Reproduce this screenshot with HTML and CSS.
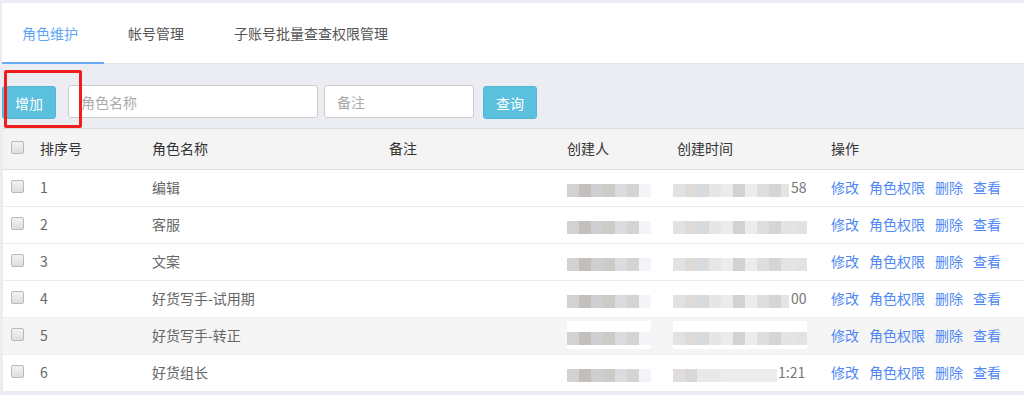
FILE: index.html
```html
<!DOCTYPE html>
<html lang="zh-CN">
<head>
    <meta charset="UTF-8">
    <title>角色维护</title>
    <link rel="stylesheet" href="styles.css">
</head>
<body>

    <div class="tabs">
        <a class="tab active">角色维护</a>
        <a class="tab">帐号管理</a>
        <a class="tab">子账号批量查查权限管理</a>
    </div>

    <div class="toolbar">
        <button class="btn btn-add">增加</button>
        <input type="text" class="field field-name" placeholder="角色名称">
        <input type="text" class="field field-note" placeholder="备注">
        <button class="btn btn-search">查询</button>
        <!-- annotation box around the add button -->
        <div class="mark"></div>
    </div>

    <table class="grid">
        <colgroup>
            <col class="c-check">
            <col class="c-no">
            <col class="c-name">
            <col class="c-note">
            <col class="c-user">
            <col class="c-time">
            <col class="c-ops">
        </colgroup>
        <thead>
            <tr>
                <th><span class="check"></span></th>
                <th>排序号</th>
                <th>角色名称</th>
                <th>备注</th>
                <th>创建人</th>
                <th>创建时间</th>
                <th>操作</th>
            </tr>
        </thead>
        <tbody>
            <tr>
                <td><span class="check"></span></td>
                <td>1</td>
                <td>编辑</td>
                <td></td>
                <td><span class="blur blur-user"></span></td>
                <td><span class="blur blur-time"></span><span class="tail">58</span></td>
                <td class="ops"><a>修改</a><a>角色权限</a><a>删除</a><a>查看</a></td>
            </tr>
            <tr>
                <td><span class="check"></span></td>
                <td>2</td>
                <td>客服</td>
                <td></td>
                <td><span class="blur blur-user"></span></td>
                <td><span class="blur blur-full"></span></td>
                <td class="ops"><a>修改</a><a>角色权限</a><a>删除</a><a>查看</a></td>
            </tr>
            <tr>
                <td><span class="check"></span></td>
                <td>3</td>
                <td>文案</td>
                <td></td>
                <td><span class="blur blur-user"></span></td>
                <td><span class="blur blur-full"></span></td>
                <td class="ops"><a>修改</a><a>角色权限</a><a>删除</a><a>查看</a></td>
            </tr>
            <tr>
                <td><span class="check"></span></td>
                <td>4</td>
                <td>好货写手-试用期</td>
                <td></td>
                <td><span class="blur blur-user"></span></td>
                <td><span class="blur blur-time"></span><span class="tail">00</span></td>
                <td class="ops"><a>修改</a><a>角色权限</a><a>删除</a><a>查看</a></td>
            </tr>
            <tr class="hover">
                <td><span class="check"></span></td>
                <td>5</td>
                <td>好货写手-转正</td>
                <td></td>
                <td><span class="blur blur-user"></span></td>
                <td><span class="blur blur-full"></span></td>
                <td class="ops"><a>修改</a><a>角色权限</a><a>删除</a><a>查看</a></td>
            </tr>
            <tr>
                <td><span class="check"></span></td>
                <td>6</td>
                <td>好货组长</td>
                <td></td>
                <td><span class="blur blur-user"></span></td>
                <td><span class="blur blur-short"></span><span class="tail">1:21</span></td>
                <td class="ops"><a>修改</a><a>角色权限</a><a>删除</a><a>查看</a></td>
            </tr>
        </tbody>
    </table>

</body>
</html>
```

FILE: styles.css
```css
body {
    margin: 0;
    padding: 3px 0 3px 2px;
    background-color: #ebedf2;
    font-family: "Noto Sans CJK SC", "Liberation Sans", sans-serif;
    font-size: 14px;
    color: #666;
}

/* tabs */
.tabs {
    display: flex;
    gap: 4px;
    height: 60px;
    background: white;
    border-bottom: 1px solid #e2e4e8;
}

.tab {
    display: flex;
    align-items: center;
    padding: 0 26px 0 20px;
    color: #555;
    cursor: pointer;
    border-bottom: 2px solid transparent;
    margin-bottom: -1px;
}

.tab.active {
    color: #5ea6f5;
    border-bottom-color: #6aabf7;
}

/* search bar */
.toolbar {
    position: relative;
    display: flex;
    align-items: flex-start;
    height: 65px;
    padding-top: 21px;
    box-sizing: border-box;
    border-bottom: 1px solid #dcdde1;
}

.btn {
    height: 33px;
    padding: 0 12px;
    margin-top: 1px;
    border: 1px solid #52b6d6;
    border-radius: 3px;
    background-color: #5bc0de;
    color: white;
    font-family: inherit;
    font-size: 14px;
}

.btn-search {
    margin-left: 9px;
}

.field {
    height: 33px;
    box-sizing: border-box;
    padding: 0 12px;
    border: 1px solid #ccc;
    border-radius: 3px;
    font-family: inherit;
    font-size: 14px;
}

.field::placeholder {
    color: #aaa;
}

.field-name {
    width: 250px;
    margin-left: 12px;
}

.field-note {
    width: 150px;
    margin-left: 6px;
}

.mark {
    position: absolute;
    left: 2px;
    top: 6px;
    width: 72px;
    height: 52px;
    border: 3px solid #f01d1d;
    border-radius: 2px;
}

/* table */
.grid {
    width: calc(100% - 1px);
    margin-left: 1px;
    border-collapse: collapse;
    table-layout: fixed;
    background: white;
}

.c-check { width: 29px; }
.c-no { width: 112px; }
.c-name { width: 237px; }
.c-note { width: 178px; }
.c-user { width: 110px; }
.c-time { width: 154px; }

.grid th {
    height: 38px;
    padding: 0 0 2px 8px;
    background-color: #f4f4f4;
    border-bottom: 1px solid #dedede;
    text-align: left;
    font-weight: normal;
    color: #333;
}

.grid td {
    height: 34px;
    padding: 0 0 2px 8px;
    border-bottom: 1px solid #ececec;
    white-space: nowrap;
    overflow: hidden;
}

.grid tr.hover td {
    background-color: #f5f5f5;
}

.check {
    display: inline-block;
    width: 11px;
    height: 11px;
    border: 1px solid #b9b9b9;
    border-radius: 2px;
    background: linear-gradient(#f3f3f3, #dedede);
    vertical-align: 0;
}

.ops a {
    color: #4f88f4;
    margin-right: 10px;
    cursor: pointer;
}

/* pixelated creator / time cells */
.blur {
    display: inline-block;
    height: 28px;
    vertical-align: middle;
    background:
        linear-gradient(#ffffff 0 40%, transparent 40% 85%, #ffffff 85%),
        repeating-linear-gradient(90deg, #d4d2d1 0 12px, #c2bfbd 12px 24px, #cfcfd1 24px 36px, #cdcac8 36px 48px, #dcdcde 48px 60px, #d6d4d3 60px 72px, #f2f4f8 72px 84px);
}

.blur-user {
    width: 84px;
}

.blur-time,
.blur-full {
    width: 116px;
    margin-left: -4px;
    margin-right: 2px;
    background:
        linear-gradient(#ffffff 0 40%, transparent 40% 85%, #ffffff 85%),
        repeating-linear-gradient(90deg, #e2e2e2 0 12px, #dedad8 12px 24px, #d8dadd 24px 36px, #e6e6e6 36px 48px, #ececec 48px 60px, #d4d2d1 60px 72px, #ebeced 72px 84px, #dedede 84px 96px, #d6d5d4 96px 108px, #e4e4e4 108px 124px);
}

.blur-full {
    width: 134px;
}

.blur-short {
    width: 104px;
    margin-left: -4px;
    margin-right: 1px;
    background:
        linear-gradient(#ffffff 0 40%, transparent 40% 85%, #ffffff 85%),
        repeating-linear-gradient(90deg, #e0ddda 0 12px, #d6d8db 12px 24px, #e9e9e9 24px 48px, #ececec 48px 104px);
}

.tail {
    color: #777;
    vertical-align: middle;
}
```
